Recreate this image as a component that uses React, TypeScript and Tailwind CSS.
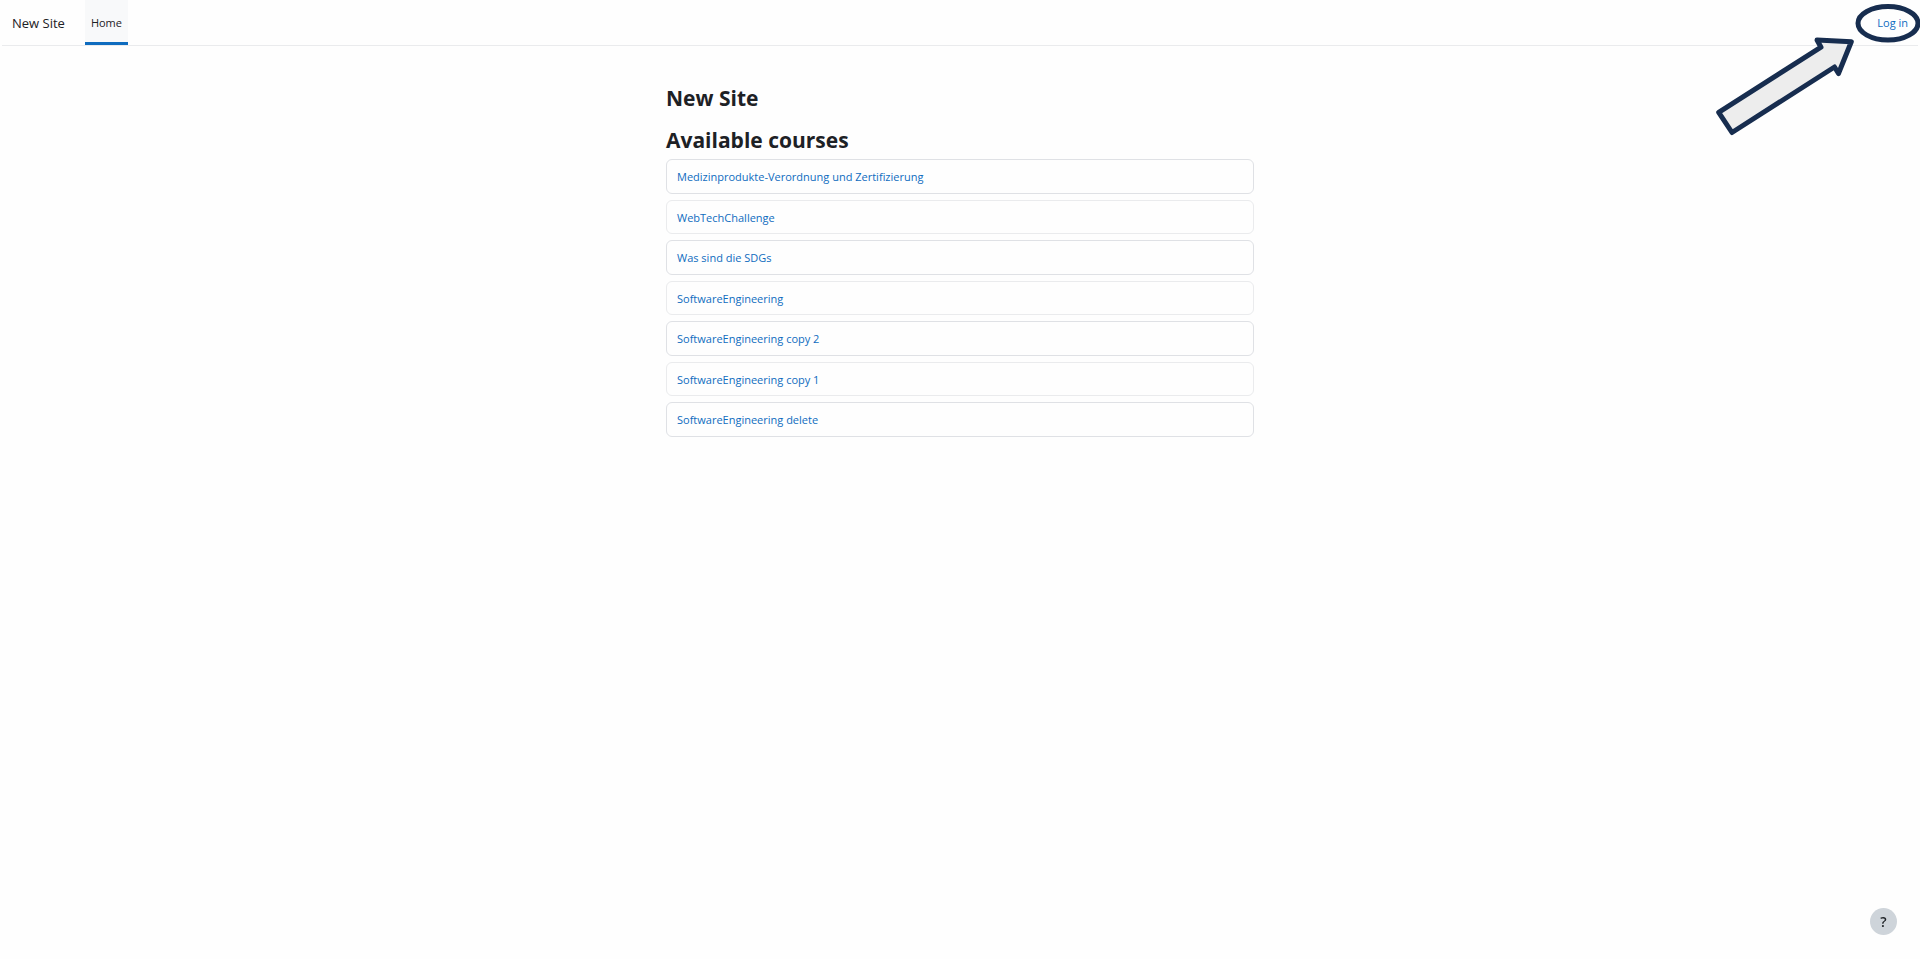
const courses: string[] = [
  'Medizinprodukte-Verordnung und Zertifizierung',
  'WebTechChallenge',
  'Was sind die SDGs',
  'SoftwareEngineering',
  'SoftwareEngineering copy 2',
  'SoftwareEngineering copy 1',
  'SoftwareEngineering delete',
];

function Header() {
  return (
    <header className="mx-0.5 flex h-[46px] items-stretch border-b border-[#eaebed]">
      <a href="#" className="flex items-center pt-0.5 pl-2.5 text-[13px] text-[#1d2125]">
        New Site
      </a>
      <nav aria-label="Main" className="ml-5 flex">
        <a
          href="#"
          aria-current="page"
          className="flex items-center justify-center border-b-3 border-[#0f6cbf] bg-[#f8f9fa] px-1.5 pt-1 text-[11px] text-[#1d2125]"
        >
          Home
        </a>
      </nav>
      <a href="#" className="ml-auto flex items-center pt-0.5 pr-2.5 text-[11px] text-[#0f6cbf]">
        Log in
      </a>
    </header>
  );
}

function LoginCallout() {
  return (
    <svg
      aria-hidden="true"
      viewBox="0 0 220 150"
      className="pointer-events-none absolute top-0 right-0 h-[150px] w-[220px]"
      stroke="#172d4f"
      strokeWidth="5"
      strokeLinejoin="round"
    >
      <ellipse cx="188" cy="23.3" rx="30" ry="16.7" fill="none" />
      <path
        d="M151.3 41.7 L117 40 L121 47.2 L18.7 112.3 L32 132.5 L134.5 67 L138.5 73.5 Z"
        fill="#ededed"
      />
    </svg>
  );
}

export default function App() {
  return (
    <div className="relative min-h-screen bg-[#fefefe] font-['Open_Sans','Noto_Sans',sans-serif]">
      <Header />
      <LoginCallout />
      <main className="mx-auto w-full max-w-[588px] pt-9 text-[#1d2125]">
        <h1 className="text-[21px] leading-8 font-bold">New Site</h1>
        <h2 className="mt-2.5 text-[21px] leading-8 font-bold">Available courses</h2>
        <ul className="mt-[3px] flex flex-col gap-1.5">
          {courses.map((name) => (
            <li
              key={name}
              className="flex h-[35px] items-center rounded-md border border-[#dfe1e5] px-2.5 pt-0.5 text-[11px] even:h-[34px] even:border-[#eaebed]"
            >
              <a href="#" className="text-[#0f6cbf]">
                {name}
              </a>
            </li>
          ))}
        </ul>
      </main>
      <button
        type="button"
        aria-label="Help"
        className="fixed right-[23px] bottom-6 flex size-[27px] items-center justify-center rounded-full bg-[#ced4da] text-[14px] font-semibold text-[#1d2125]"
      >
        ?
      </button>
    </div>
  );
}
